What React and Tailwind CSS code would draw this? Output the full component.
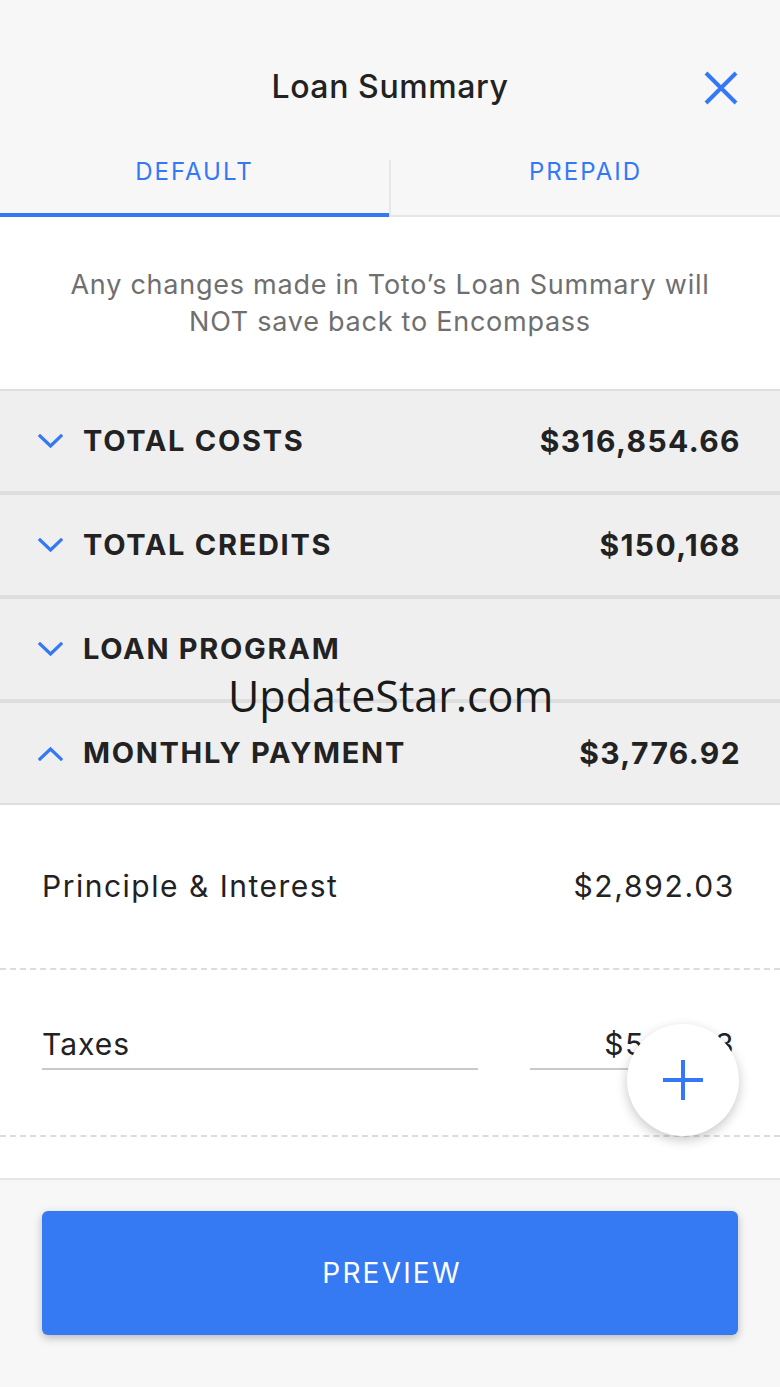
import React from "react";

const font = { fontFamily: "Inter, Roboto, 'Liberation Sans', sans-serif" };

const sections = [
  { label: "TOTAL COSTS", value: "$316,854.66", open: false },
  { label: "TOTAL CREDITS", value: "$150,168", open: false },
  { label: "LOAN PROGRAM", value: "", open: false },
  { label: "MONTHLY PAYMENT", value: "$3,776.92", open: true },
];

const Chevron = ({ up }) => (
  <svg width="25" height="15" viewBox="0 0 25 15" fill="none" className="shrink-0">
    <path
      d={up ? "M2 13 L12.5 3 L23 13" : "M2 2 L12.5 12 L23 2"}
      stroke="#3478f6"
      strokeWidth="3.2"
      strokeLinecap="square"
    />
  </svg>
);

const App = () => {
  return (
    <div
      className="relative w-full min-h-[1387px] flex flex-col bg-white text-[#222]"
      style={font}
    >
      {/* header */}
      <div className="bg-[#f7f7f8]">
        <div className="relative h-[130px] pt-[44px] flex items-center justify-center">
          <h1 className="text-[32px] font-medium tracking-[0.6px] text-[#222]">Loan Summary</h1>
          <button className="absolute right-[42px] top-[71px]">
            <svg width="34" height="34" viewBox="0 0 34 34">
              <path d="M2 2 L32 32 M32 2 L2 32" stroke="#3478f6" strokeWidth="4" />
            </svg>
          </button>
        </div>

        <div className="flex h-[87px] border-b-2 border-[#e6e6e6]">
          <div className="relative flex-1 flex items-center justify-center pb-[2px]">
            <span className="text-[24px] text-[#3478f6] tracking-[2px]">DEFAULT</span>
            <div className="absolute left-0 right-0 bottom-[-2px] h-[4px] bg-[#3478f6]" />
          </div>
          <div className="w-[2px] bg-[#e8e8e8] mt-[30px]" />
          <div className="flex-1 flex items-center justify-center pb-[2px]">
            <span className="text-[24px] text-[#3478f6] tracking-[2px]">PREPAID</span>
          </div>
        </div>
      </div>

      {/* notice */}
      <div className="h-[174px] flex items-center justify-center px-[20px] border-b-2 border-[#dedede]">
        <p className="text-center text-[27px] leading-[37px] text-[#6f6f6f] tracking-[0.75px]">
          Any changes made in Toto’s Loan Summary will
          <br />
          NOT save back to Encompass
        </p>
      </div>

      {/* sections */}
      <div className="flex flex-col">
        {sections.map((s, i) => (
          <div
            key={s.label}
            className={`flex items-center justify-between pl-[38px] pr-[39px] bg-[#efefef] border-[#dedede] ${
              i === sections.length - 1 ? "h-[102px] border-b-2" : "h-[104px] border-b-4"
            }`}
          >
            <div className="flex items-center gap-[20px]">
              <Chevron up={s.open} />
              <span className="text-[29px] font-bold tracking-[1.7px] text-[#222]">{s.label}</span>
            </div>
            <span className="text-[30px] font-bold tracking-[1.4px] text-[#222]">{s.value}</span>
          </div>
        ))}
      </div>

      {/* monthly payment details */}
      <div className="relative flex flex-col">
        <div className="h-[165px] flex items-center justify-between pl-[42px] pr-[45px] border-b-2 border-dashed border-[#dcdcdc]">
          <span className="text-[30px] tracking-[1.5px]">Principle &amp; Interest</span>
          <span className="text-[30px] tracking-[1.7px]">$2,892.03</span>
        </div>
        <div className="h-[167px] flex items-start pt-[50px] pl-[42px] pr-[42px] gap-[52px] border-b-2 border-dashed border-[#dcdcdc]">
          <div className="flex-1 h-[50px] flex items-center border-b-2 border-[#c9c9c9]">
            <span className="text-[30px] tracking-[1px]">Taxes</span>
          </div>
          <div className="w-[208px] h-[50px] flex items-center justify-end pr-[3px] border-b-2 border-[#c9c9c9]">
            <span className="text-[30px] tracking-[1.5px]">$542.83</span>
          </div>
        </div>
        <div className="h-[43px] border-b-2 border-[#e6e6e6]" />

        <button className="absolute right-[41px] top-[219px] w-[112px] h-[112px] rounded-full bg-white shadow-[0_4px_12px_rgba(0,0,0,0.22)] flex items-center justify-center">
          <svg width="42" height="42" viewBox="0 0 42 42">
            <path d="M21 1 V41 M1 21 H41" stroke="#3478f6" strokeWidth="4" />
          </svg>
        </button>
      </div>

      {/* footer */}
      <div className="flex-1 bg-[#f7f7f7] pt-[31px] px-[42px] pb-[52px]">
        <button className="w-full h-[124px] rounded-[6px] bg-[#3579f3] shadow-[0_3px_8px_rgba(0,0,0,0.25)] flex items-center justify-center">
          <span className="text-[28px] text-white tracking-[2.2px] pl-[4px]">PREVIEW</span>
        </button>
      </div>

      {/* watermark */}
      <div
        className="absolute left-[228px] top-[674px] text-[43px] leading-none text-[#1a1a1a] pointer-events-none"
        style={{ fontFamily: "'Open Sans', 'DejaVu Sans', sans-serif" }}
      >
        UpdateStar.com
      </div>
    </div>
  );
};

export default App;
